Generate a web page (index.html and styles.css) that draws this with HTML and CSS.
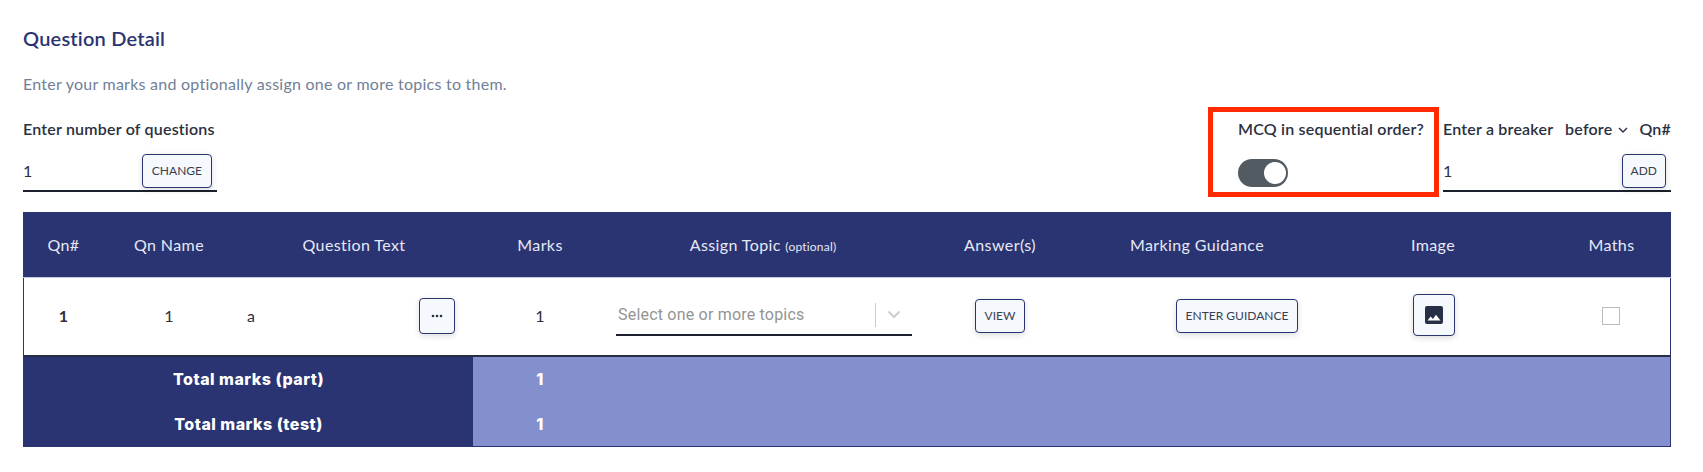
FILE: index.html
```html
<!DOCTYPE html>
<html lang="en">
<head>
  <meta charset="UTF-8">
  <meta name="viewport" content="width=device-width, initial-scale=1.0">
  <title>Question Detail</title>
  <link rel="stylesheet" href="styles.css">
</head>
<body>
  <div class="container">
    <h2 class="title">Question Detail</h2>
    <p class="subtitle">Enter your marks and optionally assign one or more topics to them.</p>

    <div class="controls">
      <div class="field field-count">
        <div class="field-label">Enter number of questions</div>
        <div class="field-input">
          <span>1</span>
          <button class="btn">CHANGE</button>
        </div>
      </div>

      <div class="controls-right">
        <div class="mcq-box">
          <div class="field-label">MCQ in sequential order?</div>
          <div class="toggle"><span class="toggle-knob"></span></div>
        </div>
        <div class="field field-breaker">
          <div class="field-label breaker-label">
            <span>Enter a breaker</span>
            <span class="before">before
              <svg width="10" height="6" viewBox="0 0 10 6"><path d="M1 1l4 4 4-4" fill="none" stroke="#2b3040" stroke-width="1.4"/></svg>
            </span>
            <span>Qn#</span>
          </div>
          <div class="field-input">
            <span>1</span>
            <button class="btn btn-add">ADD</button>
          </div>
        </div>
      </div>
    </div>

    <table class="marks-table">
      <thead>
        <tr>
          <th class="col-num">Qn#</th>
          <th class="col-name">Qn Name</th>
          <th class="col-text">Question Text</th>
          <th class="col-marks">Marks</th>
          <th class="col-topic">Assign Topic <small>(optional)</small></th>
          <th class="col-answer">Answer(s)</th>
          <th class="col-guide">Marking Guidance</th>
          <th class="col-image">Image</th>
          <th class="col-maths">Maths</th>
        </tr>
      </thead>
      <tbody>
        <tr class="row">
          <td class="num">1</td>
          <td>1</td>
          <td>
            <div class="text-cell">
              <span>a</span>
              <button class="btn btn-dots">
                <svg width="12" height="4" viewBox="0 0 12 4"><circle cx="2" cy="2" r="1.3"/><circle cx="6" cy="2" r="1.3"/><circle cx="10" cy="2" r="1.3"/></svg>
              </button>
            </div>
          </td>
          <td>1</td>
          <td>
            <div class="topic-select">
              <span class="placeholder">Select one or more topics</span>
              <span class="sep"></span>
              <svg class="chev" width="14" height="9" viewBox="0 0 14 9"><path d="M1.5 1.5L7 7l5.5-5.5" fill="none" stroke="#ccc" stroke-width="2"/></svg>
            </div>
          </td>
          <td><button class="btn">VIEW</button></td>
          <td><button class="btn btn-guide">ENTER GUIDANCE</button></td>
          <td>
            <button class="btn btn-image">
              <svg width="18" height="18" viewBox="0 0 18 18"><path d="M2 0h14a2 2 0 0 1 2 2v14a2 2 0 0 1-2 2H2a2 2 0 0 1-2-2V2a2 2 0 0 1 2-2z" fill="#272f46"/><path d="M2.5 14.5l3.2-4 2.3 2.6 3-4.3 4.5 5.7z" fill="#fff"/></svg>
            </button>
          </td>
          <td><span class="check"></span></td>
        </tr>
      </tbody>
      <tfoot>
        <tr>
          <th colspan="3">Total marks (part)</th>
          <td class="total">1</td>
          <td class="total" colspan="5"></td>
        </tr>
        <tr>
          <th colspan="3">Total marks (test)</th>
          <td class="total">1</td>
          <td class="total" colspan="5"></td>
        </tr>
      </tfoot>
    </table>
  </div>
</body>
</html>
```

FILE: styles.css
```css
body {
  font-family: 'Lato', sans-serif;
  font-size: 16px;
  letter-spacing: 0.2px;
  background: #fff;
  color: #2b3040;
  margin: 0;
}
.container {
  padding: 26px 32px 0 23px;
}
.title {
  color: #2a3472;
  font-size: 20px;
  font-weight: 600;
  line-height: 24px;
  margin: 0;
}
.subtitle {
  color: #718096;
  font-size: 16px;
  letter-spacing: 0.25px;
  line-height: 20px;
  margin: 24px 0 0;
}
.controls {
  display: flex;
  justify-content: space-between;
  align-items: flex-end;
  height: 118px;
}
.controls-right {
  display: flex;
  align-items: flex-end;
  gap: 4px;
}
.field {
  padding-bottom: 20px;
}
.field-count {
  width: 194px;
}
.field-breaker {
  width: 228px;
}
.field-label {
  font-weight: 600;
  line-height: 20px;
  white-space: nowrap;
}
.breaker-label {
  display: flex;
  justify-content: space-between;
}
.before svg {
  margin-left: 1px;
  vertical-align: 2px;
}
.field-input {
  display: flex;
  justify-content: space-between;
  align-items: center;
  height: 41px;
  margin-top: 12px;
  padding: 0 5px 0 0;
  border-bottom: 2px solid #1a202c;
  box-sizing: border-box;
}
.btn {
  background: #f5f8fc;
  border: 1px solid #2a3472;
  border-radius: 4px;
  box-shadow: 0 2px 6px rgba(0, 0, 0, 0.14);
  color: #3a4050;
  font-family: inherit;
  font-size: 12px;
  line-height: 16px;
  height: 34px;
  padding: 0 9px;
  cursor: pointer;
}
.btn-add {
  padding: 0 8px;
}
.btn-guide {
  margin-left: 80px;
}
.btn-dots {
  width: 36px;
  height: 36px;
  padding: 0;
}
.btn-dots svg {
  fill: #2b3040;
  display: block;
  margin: auto;
}
.btn-image {
  width: 42px;
  height: 42px;
  margin-left: 2px;
  padding: 0;
}
.btn-image svg {
  display: block;
  margin: auto;
}
.mcq-box {
  width: 231px;
  height: 90px;
  border: 5px solid #ff2a00;
  box-sizing: border-box;
  padding: 7px 0 0 25px;
  margin-bottom: 15px;
}
.toggle {
  width: 50px;
  height: 28px;
  margin-top: 20px;
  border-radius: 14px;
  background: #535b62;
  display: flex;
  justify-content: flex-end;
  align-items: center;
  padding: 0 2px;
  box-sizing: border-box;
}
.toggle-knob {
  width: 22px;
  height: 22px;
  border-radius: 50%;
  background: #fff;
}
.marks-table {
  width: 1648px;
  border-collapse: collapse;
  table-layout: fixed;
  border: 1px solid #2a3472;
}
.marks-table thead th {
  background: #2a3472;
  color: #e6e9f5;
  font-weight: 400;
  letter-spacing: 0.4px;
  height: 62px;
  padding: 0 0 2px;
  border-bottom: 1px solid #c4c9e2;
}
.marks-table small {
  font-size: 12px;
  letter-spacing: 0.2px;
}
.col-num { width: 79px; }
.col-name { width: 132px; }
.col-text { width: 238px; }
.col-marks { width: 134px; }
.col-topic { width: 312px; }
.col-answer { width: 162px; }
.col-guide { width: 232px; }
.col-image { width: 240px; }
.row td {
  height: 75px;
  padding: 0 0 2px;
  text-align: center;
  border-bottom: 2px solid #272f46;
}
.row .num {
  font-weight: 700;
}
.text-cell {
  display: flex;
  justify-content: space-between;
  align-items: center;
  padding: 0 18px 0 12px;
}
.topic-select {
  display: flex;
  align-items: center;
  height: 40px;
  margin: 0 7px 0 9px;
  padding-left: 2px;
  border-bottom: 2px solid #1a202c;
  box-sizing: border-box;
}
.placeholder {
  font-family: 'Roboto', sans-serif;
  color: #949494;
  width: 257px;
  text-align: left;
  white-space: nowrap;
}
.sep {
  width: 1px;
  height: 24px;
  background: #ccc;
}
.chev {
  margin-left: 11px;
}
.check {
  display: block;
  width: 18px;
  height: 18px;
  margin-left: calc(50% - 10px);
  border: 1px solid #bbb;
  box-sizing: border-box;
}
.marks-table tfoot th {
  background: #2a3472;
  color: #fff;
  font-family: 'Inter', sans-serif;
  font-weight: 800;
  letter-spacing: 0.5px;
  height: 44.5px;
  padding: 0;
}
.total {
  background: #848fce;
  color: #fff;
  font-family: 'Inter', sans-serif;
  font-weight: 800;
  text-align: center;
  padding: 0;
}
```
